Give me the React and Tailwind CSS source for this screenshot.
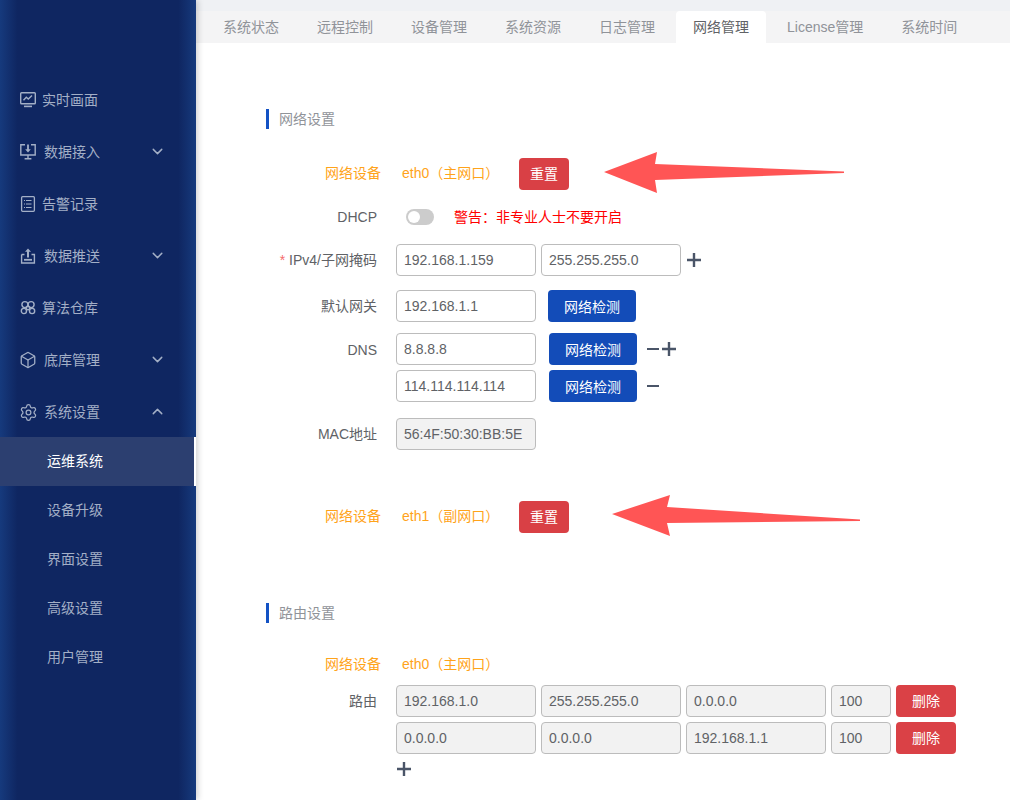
import React from "react";
import { Box, Settings, ChevronDown, ChevronUp } from "lucide-react";

const IconScreen = () => (
  <svg width="16" height="16" viewBox="0 0 16 16" fill="none" stroke="currentColor" strokeWidth="1.4">
    <rect x="0.7" y="0.7" width="14.6" height="11" rx="0.8" />
    <path d="M3.5 8.2 L6.3 5.2 L8.3 7 L12 3.4" />
    <path d="M4 14.4 H12" strokeWidth="1.6" />
  </svg>
);
const IconDown = () => (
  <svg width="16" height="16" viewBox="0 0 16 16" fill="none" stroke="currentColor" strokeWidth="1.4">
    <path d="M5 0.8 H0.8 V11 H15.2 V0.8 H11" />
    <path d="M8 0.5 V6" strokeWidth="1.8" />
    <path d="M5.2 5.2 L8 8.6 L10.8 5.2 Z" fill="currentColor" stroke="none" />
    <path d="M8 11 V14.4 M4.6 14.8 H11.4" />
  </svg>
);
const IconDoc = () => (
  <svg width="16" height="16" viewBox="0 0 16 16" fill="none" stroke="currentColor" strokeWidth="1.3">
    <rect x="1.6" y="0.7" width="12.8" height="14.6" rx="1" />
    <path d="M6 4.5 H11.5 M6 8 H11.5 M6 11.5 H11.5" strokeWidth="1.1" />
    <path d="M4 4.5 H5 M4 8 H5 M4 11.5 H5" strokeWidth="1.1" />
  </svg>
);
const IconUpload = () => (
  <svg width="16" height="16" viewBox="0 0 16 16" fill="none" stroke="currentColor" strokeWidth="1.4">
    <path d="M1.6 6.5 V15 H14.4 V6.5 H11.5 M4.5 6.5 H1.6" />
    <path d="M8 3 V9.5" strokeWidth="2" />
    <path d="M5 3.8 L8 0.6 L11 3.8 Z" fill="currentColor" stroke="none" />
    <path d="M4 11.8 H12" strokeWidth="1.8" />
  </svg>
);
const IconFlower = () => (
  <svg width="16" height="16" viewBox="0 0 16 16" fill="none" stroke="currentColor" strokeWidth="1.4">
    <circle cx="4.9" cy="4.6" r="3" />
    <circle cx="11.1" cy="4.6" r="3" />
    <circle cx="3.9" cy="11" r="2.6" />
    <circle cx="12.1" cy="11" r="2.6" />
    <circle cx="8" cy="8" r="1.8" />
  </svg>
);

const menu = [
  { label: "实时画面", icon: <IconScreen /> },
  { label: "数据接入", icon: <IconDown />, arrow: "down" },
  { label: "告警记录", icon: <IconDoc /> },
  { label: "数据推送", icon: <IconUpload />, arrow: "down" },
  { label: "算法仓库", icon: <IconFlower /> },
  { label: "底库管理", icon: <Box size={18} strokeWidth={1.7} className="-m-[1px] shrink-0" />, arrow: "down" },
  { label: "系统设置", icon: <Settings size={19} strokeWidth={1.6} className="-m-[1.5px] shrink-0" />, arrow: "up" },
];
const sub = ["运维系统", "设备升级", "界面设置", "高级设置", "用户管理"];
const tabs = ["系统状态", "远程控制", "设备管理", "系统资源", "日志管理", "网络管理", "License管理", "系统时间"];

const Sidebar = () => (
  <aside className="w-[196px] h-[800px] shrink-0 pt-[73px] text-[14px] text-[#a3afc6] bg-[linear-gradient(90deg,#163a7d_0%,#0f2661_9%,#0f2661_91%,#163a7d_100%)] shadow-[2px_0_6px_rgba(0,0,0,0.18)] z-10">
    {menu.map((m) => (
      <div key={m.label} className="h-[52px] flex items-center pl-[20px] pt-[2px]">
        <span className="w-[16px] h-[16px] flex shrink-0">{m.icon}</span>
        <span className={m.arrow ? "ml-[8px]" : "ml-[6px]"}>{m.label}</span>
        {m.arrow === "down" && <ChevronDown size={17} strokeWidth={2} className="ml-[49px] -mt-[2px]" />}
        {m.arrow === "up" && <ChevronUp size={17} strokeWidth={2} className="ml-[49px] -mt-[2px]" />}
      </div>
    ))}
    {sub.map((s, i) => (
      <div
        key={s}
        className={
          i === 0
            ? "h-[49px] flex items-center pl-[47px] text-white bg-[#2c3f70] border-r-2 border-white"
            : "h-[49px] flex items-center pl-[47px]"
        }
      >
        {s}
      </div>
    ))}
  </aside>
);

const Tabs = () => (
  <div className="h-[32px] bg-[#f4f4f5] pl-[10px] flex gap-[4px] text-[14px] text-[#909399]">
    {tabs.map((t) => (
      <div
        key={t}
        className={
          t === "网络管理"
            ? "h-[32px] px-[17px] flex items-center bg-white rounded-t-[4px] text-[#606266]"
            : "h-[32px] px-[17px] flex items-center"
        }
      >
        {t}
      </div>
    ))}
  </div>
);

const SectionTitle = ({ children, className = "" }) => (
  <div className={`h-[20px] flex items-center border-l-[3px] border-[#1352c4] pl-[10px] text-[14px] text-[#909399] ${className}`}>
    {children}
  </div>
);

const Row = ({ label, labelClass = "pr-[4px] text-[#606266]", star, className = "", children }) => (
  <div className={`flex items-center h-[32px] text-[14px] ${className}`}>
    <div className={`w-[115px] mr-[15px] text-right shrink-0 ${labelClass}`}>
      {star && <span className="text-[#f56c6c] mr-[4px]">*</span>}
      {label}
    </div>
    {children}
  </div>
);

const Field = ({ value, w = "w-[140px]", disabled, className = "" }) => (
  <input
    readOnly
    value={value}
    className={`${w} h-[32px] shrink-0 rounded-[4px] border border-[#bcbcbc] px-[7px] text-[14px] text-[#606266] outline-none ${disabled ? "bg-[#f2f2f2]" : "bg-white"} ${className}`}
  />
);

const Btn = ({ children, color = "bg-[#134cb8] pt-[2px]", w = "w-[88px]", className = "" }) => (
  <button className={`${w} h-[32px] shrink-0 rounded-[4px] ${color} text-white text-[14px] flex items-center justify-center ${className}`}>
    {children}
  </button>
);

const Minus = ({ className = "" }) => (
  <svg width="12" height="2" viewBox="0 0 12 2" className={`shrink-0 ${className}`}>
    <rect width="12" height="2" fill="#4a5568" />
  </svg>
);
const Plus = ({ className = "" }) => (
  <svg width="14" height="14" viewBox="0 0 14 14" className={`shrink-0 ${className}`}>
    <path d="M5.8 0 H8.2 V5.8 H14 V8.2 H8.2 V14 H5.8 V8.2 H0 V5.8 H5.8 Z" fill="#4a5568" />
  </svg>
);

const DeviceRow = ({ value, reset, className = "" }) => (
  <Row label="网络设备" labelClass={reset ? "pb-[2px] text-[#ffa31a]" : "text-[#ffa31a]"} className={className}>
    <span className={reset ? "ml-[6px] w-[117px] pb-[2px] text-[#ffa31a] whitespace-nowrap" : "ml-[6px] w-[117px] text-[#ffa31a] whitespace-nowrap"}>
      {value}
    </span>
    {reset && (
      <Btn color="bg-[#d94045]" w="w-[50px]">
        重置
      </Btn>
    )}
  </Row>
);

const Arrow = ({ points }) => (
  <svg className="absolute left-0 top-0 pointer-events-none" width="1010" height="800" viewBox="0 0 1010 800">
    <polygon points={points} fill="#ff5555" />
  </svg>
);

const routes = [
  ["192.168.1.0", "255.255.255.0", "0.0.0.0", "100"],
  ["0.0.0.0", "0.0.0.0", "192.168.1.1", "100"],
];

export default function App() {
  return (
    <div
      className="relative w-[1010px] h-[800px] overflow-hidden flex bg-white"
      style={{ fontFamily: '"Liberation Sans","Noto Sans CJK SC",sans-serif' }}
    >
      <Sidebar />
      <main className="flex-1 min-w-0">
        <div className="h-[11px] bg-[#eff1f4]" />
        <Tabs />
        <div className="pl-[70px] pt-[66px]">
          <SectionTitle>网络设置</SectionTitle>
          <DeviceRow value="eth0（主网口）" reset className="mt-[29px]" />
          <Row label="DHCP" className="mt-[11px]">
            <span className="ml-[10px] w-[28px] h-[16px] rounded-full bg-[#cccccc] relative shrink-0">
              <span className="absolute left-[2px] top-[2px] w-[12px] h-[12px] rounded-full bg-white" />
            </span>
            <span className="ml-[20px] text-[#ff0000]">警告：非专业人士不要开启</span>
          </Row>
          <Row label="IPv4/子网掩码" star className="mt-[11px]">
            <Field value="192.168.1.159" />
            <Field value="255.255.255.0" className="ml-[5px]" />
            <Plus className="ml-[6px]" />
          </Row>
          <Row label="默认网关" className="mt-[14px]">
            <Field value="192.168.1.1" />
            <Btn className="ml-[12px]">网络检测</Btn>
          </Row>
          <Row label="DNS" labelClass="pr-[4px] pt-[2px] text-[#606266]" className="mt-[11px]">
            <Field value="8.8.8.8" />
            <Btn className="ml-[13px]">网络检测</Btn>
            <Minus className="ml-[10px]" />
            <Plus className="ml-[3px]" />
          </Row>
          <Row label="" className="mt-[5px]">
            <Field value="114.114.114.114" />
            <Btn className="ml-[13px]">网络检测</Btn>
            <Minus className="ml-[10px]" />
          </Row>
          <Row label="MAC地址" className="mt-[16px]">
            <Field value="56:4F:50:30:BB:5E" disabled />
          </Row>
          <DeviceRow value="eth1（副网口）" reset className="mt-[51px]" />

          <SectionTitle className="mt-[70px]">路由设置</SectionTitle>
          <DeviceRow value="eth0（主网口）" className="mt-[25px]" />
          {routes.map((r, i) => (
            <Row key={i} label={i === 0 ? "路由" : ""} className="mt-[5px]">
              <Field value={r[0]} disabled />
              <Field value={r[1]} disabled className="ml-[5px]" />
              <Field value={r[2]} disabled className="ml-[5px]" />
              <Field value={r[3]} disabled w="w-[60px]" className="ml-[5px]" />
              <Btn color="bg-[#da4146]" w="w-[60px]" className="ml-[5px]">
                删除
              </Btn>
            </Row>
          ))}
          <div className="mt-[8px] ml-[131px]">
            <Plus />
          </div>
        </div>
      </main>
      <Arrow points="604,172 657,152 655,164 844,171.5 844,173 655,180 657,193" />
      <Arrow points="612,514 670,495 667,507 860,519.5 860,521 667,523 670,536" />
    </div>
  );
}
